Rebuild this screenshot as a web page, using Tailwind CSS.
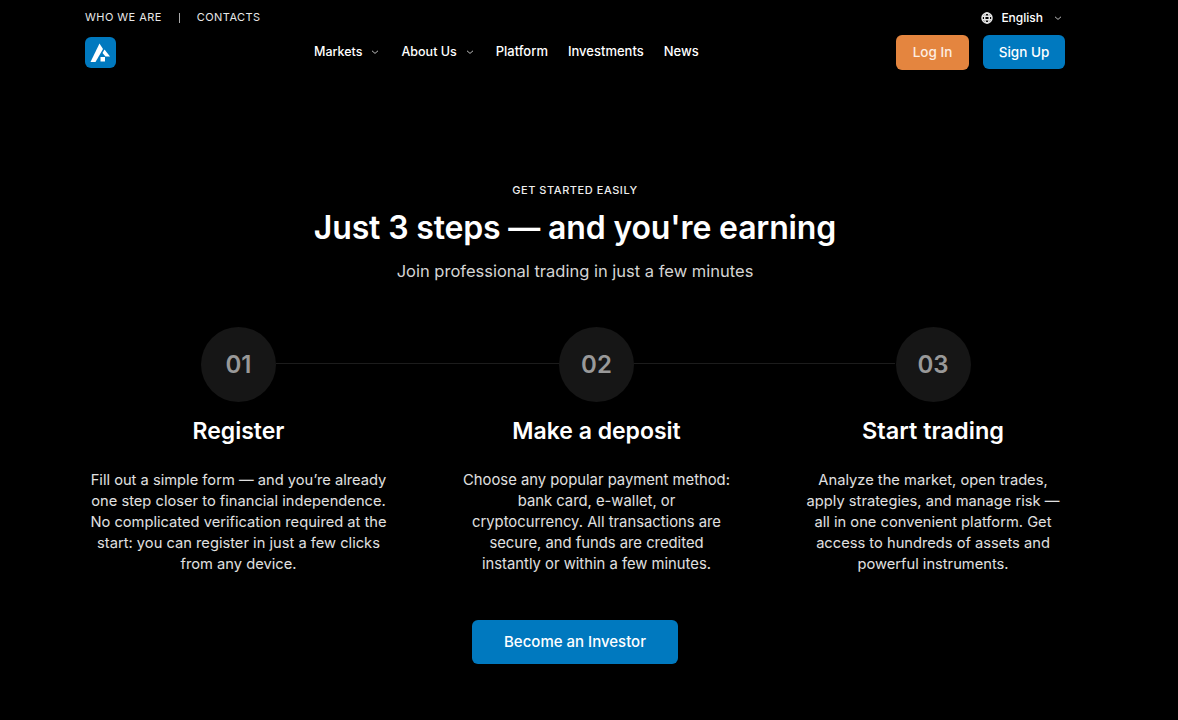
<!DOCTYPE html>
<html lang="en">
  <head>
    <meta charset="UTF-8" />
    <meta name="viewport" content="width=device-width, initial-scale=1.0" />
    <title>Just 3 steps</title>
    <script src="https://cdn.jsdelivr.net/npm/@tailwindcss/browser@4"></script>
    <style>
      body {
        font-family: "Inter", "Noto Sans", sans-serif;
      }
    </style>
  </head>
  <body class="bg-black text-white min-h-screen overflow-hidden">
    <header class="mx-[85px] w-[980px]">
      <!-- top strip -->
      <div class="flex items-center justify-between h-[35px] text-[11px]">
        <div class="flex items-center tracking-[0.04em] text-[#e8e8e8]">
          <a>WHO WE ARE</a>
          <span class="mx-[17px] w-px h-[10px] bg-[#aaa]"></span>
          <a>CONTACTS</a>
        </div>
        <div class="flex items-center mr-[3px]">
          <svg class="w-[12px] h-[12px] mr-[8px]" viewBox="0 0 12 12" fill="none" stroke="#e5e5e5" stroke-width="1.5">
            <circle cx="6" cy="6" r="5" />
            <ellipse cx="6" cy="6" rx="2.3" ry="5" />
            <path d="M1 4.2h10M1 7.8h10" />
          </svg>
          <span class="text-[12px] font-medium mt-[1px]">English</span>
          <svg class="w-[8px] h-[8px] ml-[11px]" viewBox="0 0 8 8" fill="none" stroke="#bbb" stroke-width="1">
            <path d="M1 2.8 4 5.4 7 2.8" />
          </svg>
        </div>
      </div>
      <!-- main nav -->
      <div class="flex items-center h-[34px]">
        <div class="w-[31px] h-[31px] mt-[1px] rounded-[6px] bg-[#0079bf] flex items-center justify-center">
          <svg class="w-[31px] h-[31px]" viewBox="0 0 31 31" fill="#fff">
            <path d="M14.5 6.5 18 12 10.5 25H5.5Z" />
            <path d="M19.5 12.5 25 19.5H20.5L17.5 16Z" />
            <rect x="15.5" y="20" width="4.5" height="4.5" />
          </svg>
        </div>
        <nav class="flex items-center ml-[198px] text-[13px] font-medium">
          <a class="mt-[1px] text-[12.5px]">Markets</a>
          <svg class="w-[8px] h-[8px] ml-[9px] mr-[22px]" viewBox="0 0 8 8" fill="none" stroke="#bbb" stroke-width="1">
            <path d="M1 2.8 4 5.4 7 2.8" />
          </svg>
          <a class="mt-[1px] text-[12.5px]">About Us</a>
          <svg class="w-[8px] h-[8px] ml-[9px] mr-[22px]" viewBox="0 0 8 8" fill="none" stroke="#bbb" stroke-width="1">
            <path d="M1 2.8 4 5.4 7 2.8" />
          </svg>
          <a class="mb-[1px]">Platform</a>
          <a class="ml-[20px] mb-[1px]">Investments</a>
          <a class="ml-[20px] mb-[1px]">News</a>
        </nav>
        <div class="ml-auto flex items-center gap-[14px] text-[13.5px] font-medium">
          <a class="w-[73px] h-[35px] flex items-center justify-center rounded-[6px] bg-[#e4853f] text-[#fdeee3]">Log In</a>
          <a class="w-[82px] h-[34px] flex items-center justify-center rounded-[6px] bg-[#0079bf]">Sign Up</a>
        </div>
      </div>
    </header>

    <main class="mx-[85px] w-[980px] flex flex-col items-center">
      <p class="mt-[113px] text-[11px] font-medium tracking-[0.05em] leading-[16px] text-[#eee]">GET STARTED EASILY</p>
      <h1 class="mt-[10px] text-[32px] font-semibold leading-[40px] tracking-[-0.005em]">Just 3 steps — and you're earning</h1>
      <p class="mt-[11px] text-[16.5px] leading-[24px] text-[#d4d4d4]">Join professional trading in just a few minutes</p>

      <div class="relative mt-[44px] w-full flex justify-between text-center">
        <div class="absolute left-[191px] top-[36px] w-[619px] h-px bg-[#1c1c1c]"></div>

        <div class="relative w-[307px] flex flex-col items-center">
          <div class="w-[75px] h-[75px] rounded-full bg-[#161616] flex items-center justify-center text-[24px] font-semibold text-[#999]">01</div>
          <h3 class="mt-[13px] text-[23px] font-semibold leading-[32px]">Register</h3>
          <p class="mt-[23px] text-[14.7px] leading-[21px] text-[#e0e0e0]">Fill out a simple form — and you’re already one step closer to financial independence. No complicated verification required at the start: you can register in just a few clicks from any device.</p>
        </div>

        <div class="relative w-[270px] flex flex-col items-center">
          <div class="w-[75px] h-[75px] rounded-full bg-[#161616] flex items-center justify-center text-[24px] font-semibold text-[#999]">02</div>
          <h3 class="mt-[13px] text-[23px] font-semibold leading-[32px]">Make a deposit</h3>
          <p class="mt-[23px] text-[14.8px] leading-[21px] text-[#e0e0e0]">Choose any popular payment method: bank card, e-wallet, or cryptocurrency. All transactions are secure, and funds are credited instantly or within a few minutes.</p>
        </div>

        <div class="relative w-[264px] flex flex-col items-center">
          <div class="w-[75px] h-[75px] rounded-full bg-[#161616] flex items-center justify-center text-[24px] font-semibold text-[#999]">03</div>
          <h3 class="mt-[13px] text-[23.5px] font-semibold leading-[32px]">Start trading</h3>
          <p class="mt-[23px] text-[14.7px] leading-[21px] text-[#e0e0e0]">Analyze the market, open trades, apply strategies, and manage risk — all in one convenient platform. Get access to hundreds of assets and powerful instruments.</p>
        </div>
      </div>

      <a class="mt-[45px] w-[206px] h-[44px] flex items-center justify-center rounded-[6px] bg-[#0079bf] text-[15px] font-medium">Become an Investor</a>
    </main>
  </body>
</html>
